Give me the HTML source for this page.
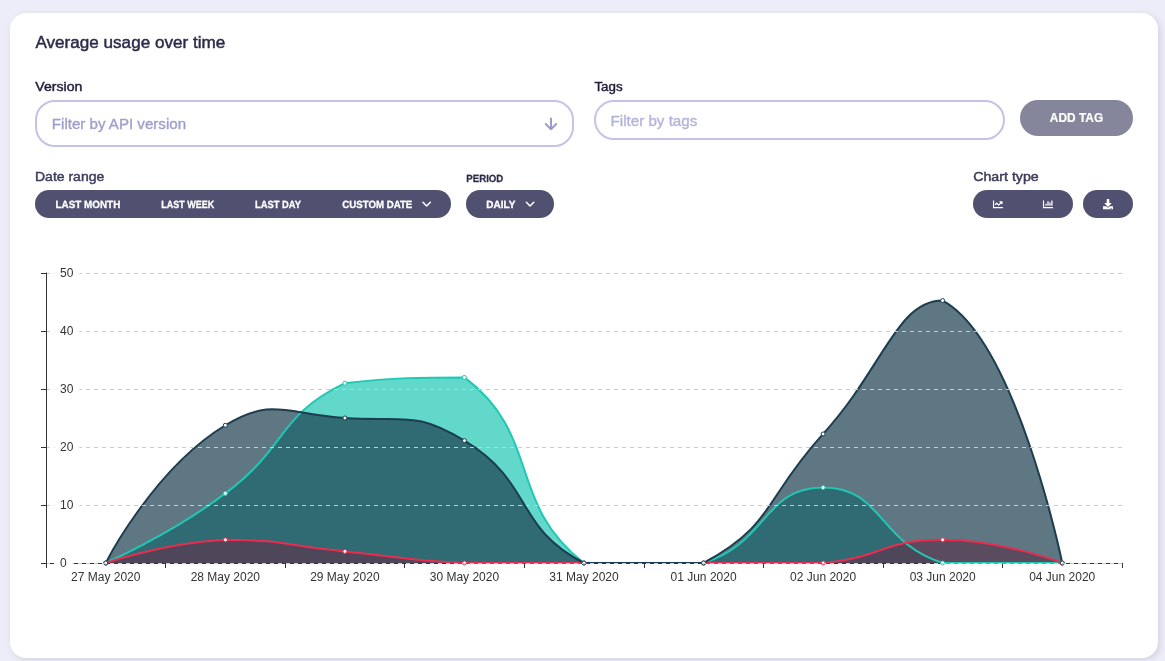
<!DOCTYPE html>
<html lang="en"><head><meta charset="utf-8"><title>Average usage over time</title>
<style>
*{box-sizing:border-box}
html,body{margin:0;padding:0}
body{width:1165px;height:661px;overflow:hidden;position:relative;background:#ededf9;font-family:"Liberation Sans",Arial,sans-serif}
.card{position:absolute;left:10px;top:13px;width:1148px;height:645px;background:#fff;border-radius:16px;box-shadow:2px 2px 6px rgba(40,40,80,.14)}
.t{position:absolute;display:block;margin:0;padding:0;white-space:nowrap;line-height:1;transform-origin:0 50%}
.inp{position:absolute;border:2px solid #c3c3e7;background:#fff;border-radius:20px}
.btn{position:absolute;background:#505071;border-radius:14px;height:28px;top:190px}
.chart,.ico{position:absolute;left:0;top:0}
#root{position:absolute;left:0;top:0;width:1165px;height:661px;will-change:transform}
</style></head><body>
<main id="root">
<section class="card" aria-label="Average usage over time"></section>
<div class="inp" style="left:35px;top:100px;width:539px;height:47px;border-radius:20px"></div>
<div class="inp" style="left:594px;top:100px;width:411px;height:40px"></div>
<div class="btn" style="left:1020px;top:100px;width:113px;height:36px;border-radius:18px;background:#85859c"></div>
<div class="btn" style="left:35px;width:416px"></div>
<div class="btn" style="left:466px;width:88px"></div>
<div class="btn" style="left:973px;width:100px"></div>
<div class="btn" style="left:1083px;width:50px"></div>
<h1 class="t" style="left:34px;top:35px;font-size:16px;font-weight:400;color:#2b2b4b;-webkit-text-stroke:0.45px #2b2b4b;transform:translateX(1.42px) scaleX(1.0688)">Average usage over time</h1>
<label class="t" style="left:34px;top:80px;font-size:13px;font-weight:400;color:#1f1f3c;-webkit-text-stroke:0.45px #1f1f3c;transform:translateX(1.33px) scaleX(1.0836)">Version</label>
<label class="t" style="left:593px;top:80px;font-size:13px;font-weight:400;color:#1f1f3c;-webkit-text-stroke:0.45px #1f1f3c;transform:translateX(1.47px) scaleX(1.0231)">Tags</label>
<span class="t" style="left:51px;top:117px;font-size:14px;font-weight:400;color:#9f9fcd;-webkit-text-stroke:0.35px #9f9fcd;transform:translateX(0.81px) scaleX(1.0782)">Filter by API version</span>
<span class="t" style="left:610px;top:114px;font-size:14px;font-weight:400;color:#b4b4d9;-webkit-text-stroke:0.35px #b4b4d9;transform:translateX(0.53px) scaleX(1.0829)">Filter by tags</span>
<span class="t" style="left:1049px;top:112px;font-size:12px;font-weight:700;color:#fff;-webkit-text-stroke:0.2px #fff;transform:translateX(0.85px) scaleX(0.9910)">ADD TAG</span>
<label class="t" style="left:34px;top:170px;font-size:13px;font-weight:400;color:#3c3c5c;-webkit-text-stroke:0.45px #3c3c5c;transform:translateX(1.02px) scaleX(1.0763)">Date range</label>
<span class="t" style="left:55px;top:201px;font-size:10.4px;font-weight:700;color:#fff;text-rendering:geometricPrecision;-webkit-text-stroke:0.3px #fff;transform:translateX(0.46px) scaleX(0.9516)">LAST MONTH</span>
<span class="t" style="left:160px;top:201px;font-size:10.4px;font-weight:700;color:#fff;text-rendering:geometricPrecision;-webkit-text-stroke:0.3px #fff;transform:translateX(1.33px) scaleX(0.8629)">LAST WEEK</span>
<span class="t" style="left:254px;top:201px;font-size:10.4px;font-weight:700;color:#fff;text-rendering:geometricPrecision;-webkit-text-stroke:0.3px #fff;transform:translateX(0.91px) scaleX(0.9014)">LAST DAY</span>
<span class="t" style="left:341px;top:201px;font-size:10.4px;font-weight:700;color:#fff;text-rendering:geometricPrecision;-webkit-text-stroke:0.3px #fff;transform:translateX(1.23px) scaleX(0.9317)">CUSTOM DATE</span>
<label class="t" style="left:465px;top:175px;font-size:10.4px;font-weight:700;color:#2b2b4a;text-rendering:geometricPrecision;-webkit-text-stroke:0.25px #2b2b4a;transform:translateX(1.24px) scaleX(0.9315)">PERIOD</label>
<span class="t" style="left:485px;top:201px;font-size:10.4px;font-weight:700;color:#fff;text-rendering:geometricPrecision;-webkit-text-stroke:0.3px #fff;transform:translateX(1.29px) scaleX(0.9612)">DAILY</span>
<label class="t" style="left:972px;top:170px;font-size:13px;font-weight:400;color:#3c3c5c;-webkit-text-stroke:0.45px #3c3c5c;transform:translateX(1.21px) scaleX(1.0930)">Chart type</label>

<svg class="ico" width="1165" height="661" viewBox="0 0 1165 661">
<g fill="none" stroke="#9c9ccb" stroke-width="2" stroke-linecap="round" stroke-linejoin="round">
<path d="M551 118.5V129.2M545.8 124L551 129.3L556.2 124"/>
</g>
<g fill="none" stroke="#fff" stroke-width="1.5" stroke-linecap="round" stroke-linejoin="round">
<path d="M422.95 202.2L426.65 206L430.35 202.2"/>
<path d="M526.35 202.2L530.05 206L533.75 202.2"/>
</g>
<g fill="#fff">
<svg x="992.8" y="199.2" width="10.4" height="10.4" viewBox="0 0 512 512"><path d="M496 384H64V80c0-8.84-7.16-16-16-16H16C7.16 64 0 71.16 0 80v336c0 17.67 14.33 32 32 32h464c8.84 0 16-7.16 16-16v-32c0-8.840-7.16-16-16-16zM464 96H345.940c-21.38 0-32.09 25.85-16.97 40.97l32.4 32.4L288 242.750l-73.37-73.37c-12.5-12.5-32.76-12.5-45.25 0l-68.69 68.69c-6.25 6.25-6.25 16.38 0 22.63l22.62 22.62c6.25 6.25 16.38 6.25 22.63 0L192 237.250l73.37 73.37c12.5 12.5 32.76 12.5 45.25 0l96-96 32.4 32.4c15.12 15.12 40.97 4.41 40.97-16.97V112c.01-8.84-7.15-16-15.99-16z"/></svg>
<svg x="1042.8" y="199.2" width="10.4" height="10.4" viewBox="0 0 512 512"><path d="M332.8 320h38.4c6.4 0 12.8-6.4 12.8-12.8V172.800c0-6.4-6.4-12.8-12.8-12.8h-38.4c-6.4 0-12.8 6.4-12.8 12.8v134.4c0 6.4 6.4 12.8 12.8 12.8zm96 0h38.4c6.4 0 12.8-6.4 12.8-12.8V76.800c0-6.4-6.4-12.8-12.8-12.8h-38.4c-6.4 0-12.8 6.4-12.8 12.8v230.4c0 6.4 6.4 12.8 12.8 12.8zm-288 0h38.4c6.4 0 12.8-6.4 12.8-12.8v-70.4c0-6.4-6.4-12.8-12.8-12.8h-38.4c-6.4 0-12.8 6.4-12.8 12.8v70.4c0 6.4 6.4 12.8 12.8 12.8zm96 0h38.4c6.4 0 12.8-6.4 12.8-12.8V108.800c0-6.4-6.4-12.8-12.8-12.8h-38.4c-6.4 0-12.8 6.4-12.8 12.8v198.4c0 6.4 6.4 12.8 12.8 12.8zM496 384H64V80c0-8.84-7.16-16-16-16H16C7.160 64 0 71.16 0 80v336c0 17.67 14.33 32 32 32h464c8.84 0 16-7.16 16-16v-32c0-8.840-7.16-16-16-16z"/></svg>
<svg x="1102.8" y="199" width="10.4" height="10.4" viewBox="0 0 512 512"><path d="M216 0h80c13.3 0 24 10.7 24 24v168h87.7c17.8 0 26.7 21.5 14.1 34.1L269.700 378.300c-7.5 7.5-19.8 7.5-27.3 0L90.100 226.100c-12.6-12.6-3.7-34.1 14.1-34.100H192V24c0-13.3 10.7-24 24-24zm296 376v112c0 13.3-10.7 24-24 24H24c-13.3 0-24-10.7-24-24V376c0-13.3 10.7-24 24-24h146.700l49 49c20.1 20.1 52.5 20.1 72.6 0l49-49H488c13.3 0 24 10.7 24 24zm-124 88c0-11-9-20-20-20s-20 9-20 20 9 20 20 20 20-9 20-20zm64 0c0-11-9-20-20-20s-20 9-20 20 9 20 20 20 20-9 20-20z"/></svg>
</g>
</svg>

<svg class="chart" width="1165" height="661" viewBox="0 0 1165 661">
<defs><clipPath id="gclip"><rect x="45" y="272" width="1078" height="292"/></clipPath></defs>
<g shape-rendering="crispEdges" stroke="#333" stroke-width="1" fill="none">
<path d="M46.5 273 V564"/>
<path d="M41 273.5 H46"/>
<path d="M41 331.5 H46"/>
<path d="M41 389.5 H46"/>
<path d="M41 447.5 H46"/>
<path d="M41 505.5 H46"/>
<path d="M41 563.5 H46"/>
<path d="M46.5 563 V568"/>
<path d="M165.5 563 V568"/>
<path d="M285.5 563 V568"/>
<path d="M404.5 563 V568"/>
<path d="M524.5 563 V568"/>
<path d="M644.5 563 V568"/>
<path d="M763.5 563 V568"/>
<path d="M883.5 563 V568"/>
<path d="M1002.5 563 V568"/>
<path d="M1122.5 563 V568"/>
<path d="M50 563.5 H1122" stroke-dasharray="4 4"/>
</g>
<g clip-path="url(#gclip)">
<path d="M105.78 563.00 C105.78 563.00 170.37 534.73 225.33 493.40 C289.93 444.83 276.03 416.61 344.89 383.20 C395.58 377.40 422.41 377.40 464.44 377.40 C541.97 435.69 506.44 502.80 584.00 563.00 C626.00 563.00 648.77 563.00 703.56 563.00 C768.33 542.58 763.33 487.60 823.11 487.60 C882.89 487.60 877.90 542.58 942.67 563.00 C997.45 563.00 1062.22 563.00 1062.22 563.00 L1062.22 563.00 L105.78 563.00 Z" fill="#20c8b4" fill-opacity="0.7" stroke="none"/>
<path d="M105.78 563.00 C105.78 563.00 165.14 542.72 225.33 539.80 C284.70 539.80 285.11 545.60 344.89 551.40 C404.67 557.20 404.53 560.09 464.44 563.00 C524.08 563.00 524.22 563.00 584.00 563.00 C643.78 563.00 643.78 563.00 703.56 563.00 C763.33 563.00 763.89 563.00 823.11 563.00 C883.44 557.15 882.89 539.80 942.67 539.80 C1002.44 539.80 1062.22 563.00 1062.22 563.00 L1062.22 563.00 L105.78 563.00 Z" fill="#ea2c50" fill-opacity="0.7" stroke="none"/>
<path d="M105.78 563.00 C105.78 563.00 153.17 469.01 225.33 425.25 C272.72 396.51 285.58 414.19 344.89 418.00 C405.14 421.87 414.76 410.49 464.44 440.62 C534.31 482.99 513.62 526.98 584.00 563.00 C633.18 563.00 655.18 563.00 703.56 563.00 C774.74 524.58 763.87 498.97 823.11 433.95 C883.43 367.74 896.86 300.55 942.67 300.55 C1016.41 340.35 1062.22 563.00 1062.22 563.00 L1062.22 563.00 L105.78 563.00 Z" fill="#1b3d4f" fill-opacity="0.7" stroke="none"/>
<g fill="none" stroke-width="2" stroke-linejoin="bevel">
<path d="M105.78 563.00 C105.78 563.00 170.37 534.73 225.33 493.40 C289.93 444.83 276.03 416.61 344.89 383.20 C395.58 377.40 422.41 377.40 464.44 377.40 C541.97 435.69 506.44 502.80 584.00 563.00 C626.00 563.00 648.77 563.00 703.56 563.00 C768.33 542.58 763.33 487.60 823.11 487.60 C882.89 487.60 877.90 542.58 942.67 563.00 C997.45 563.00 1062.22 563.00 1062.22 563.00" stroke="#20c8b4"/>
<path d="M105.78 563.00 C105.78 563.00 165.14 542.72 225.33 539.80 C284.70 539.80 285.11 545.60 344.89 551.40 C404.67 557.20 404.53 560.09 464.44 563.00 C524.08 563.00 524.22 563.00 584.00 563.00 C643.78 563.00 643.78 563.00 703.56 563.00 C763.33 563.00 763.89 563.00 823.11 563.00 C883.44 557.15 882.89 539.80 942.67 539.80 C1002.44 539.80 1062.22 563.00 1062.22 563.00" stroke="#ea2c50"/>
<path d="M105.78 563.00 C105.78 563.00 153.17 469.01 225.33 425.25 C272.72 396.51 285.58 414.19 344.89 418.00 C405.14 421.87 414.76 410.49 464.44 440.62 C534.31 482.99 513.62 526.98 584.00 563.00 C633.18 563.00 655.18 563.00 703.56 563.00 C774.74 524.58 763.87 498.97 823.11 433.95 C883.43 367.74 896.86 300.55 942.67 300.55 C1016.41 340.35 1062.22 563.00 1062.22 563.00" stroke="#1b3d4f"/>
</g>
</g>
<g fill="#fff" stroke="#20c8b4" stroke-width="1">
<circle cx="105.78" cy="563.00" r="2"/>
<circle cx="225.33" cy="493.40" r="2"/>
<circle cx="344.89" cy="383.20" r="2"/>
<circle cx="464.44" cy="377.40" r="2"/>
<circle cx="584.00" cy="563.00" r="2"/>
<circle cx="703.56" cy="563.00" r="2"/>
<circle cx="823.11" cy="487.60" r="2"/>
<circle cx="942.67" cy="563.00" r="2"/>
<circle cx="1062.22" cy="563.00" r="2"/>
</g>
<g fill="#fff" stroke="#ea2c50" stroke-width="1">
<circle cx="105.78" cy="563.00" r="2"/>
<circle cx="225.33" cy="539.80" r="2"/>
<circle cx="344.89" cy="551.40" r="2"/>
<circle cx="464.44" cy="563.00" r="2"/>
<circle cx="584.00" cy="563.00" r="2"/>
<circle cx="703.56" cy="563.00" r="2"/>
<circle cx="823.11" cy="563.00" r="2"/>
<circle cx="942.67" cy="539.80" r="2"/>
<circle cx="1062.22" cy="563.00" r="2"/>
</g>
<g fill="#fff" stroke="#1b3d4f" stroke-width="1">
<circle cx="105.78" cy="563.00" r="2"/>
<circle cx="225.33" cy="425.25" r="2"/>
<circle cx="344.89" cy="418.00" r="2"/>
<circle cx="464.44" cy="440.62" r="2"/>
<circle cx="584.00" cy="563.00" r="2"/>
<circle cx="703.56" cy="563.00" r="2"/>
<circle cx="823.11" cy="433.95" r="2"/>
<circle cx="942.67" cy="300.55" r="2"/>
<circle cx="1062.22" cy="563.00" r="2"/>
</g>
<g shape-rendering="crispEdges" stroke="#ccc" stroke-width="1" stroke-dasharray="4 4" stroke-dashoffset="1" fill="none">
<path d="M47 273.5 H1122"/>
<path d="M47 331.5 H1122"/>
<path d="M47 389.5 H1122"/>
<path d="M47 447.5 H1122"/>
<path d="M47 505.5 H1122"/>
<path d="M47 563.5 H1122"/>
</g>
<rect x="46" y="272" width="1" height="1" fill="#333" fill-opacity="0.45"/>
<g font-family="'Liberation Sans', Arial, sans-serif" font-size="12" fill="#333">
<rect x="54.4" y="261" width="24.95" height="24" fill="#fff"/>
<text x="60" y="277.16">50</text>
<rect x="54.4" y="319" width="24.95" height="24" fill="#fff"/>
<text x="60" y="335.16">40</text>
<rect x="54.4" y="377" width="24.95" height="24" fill="#fff"/>
<text x="60" y="393.16">30</text>
<rect x="54.4" y="435" width="24.95" height="24" fill="#fff"/>
<text x="60" y="451.16">20</text>
<rect x="54.4" y="493" width="24.95" height="24" fill="#fff"/>
<text x="60" y="509.16">10</text>
<rect x="54.4" y="551" width="18.27" height="24" fill="#fff"/>
<text x="60" y="567.16">0</text>
<text x="105.78" y="581.16" text-anchor="middle">27 May 2020</text>
<text x="225.33" y="581.16" text-anchor="middle">28 May 2020</text>
<text x="344.89" y="581.16" text-anchor="middle">29 May 2020</text>
<text x="464.44" y="581.16" text-anchor="middle">30 May 2020</text>
<text x="584.00" y="581.16" text-anchor="middle">31 May 2020</text>
<text x="703.56" y="581.16" text-anchor="middle">01 Jun 2020</text>
<text x="823.11" y="581.16" text-anchor="middle">02 Jun 2020</text>
<text x="942.67" y="581.16" text-anchor="middle">03 Jun 2020</text>
<text x="1062.22" y="581.16" text-anchor="middle">04 Jun 2020</text>
</g>
</svg>
</main>
</body></html>
